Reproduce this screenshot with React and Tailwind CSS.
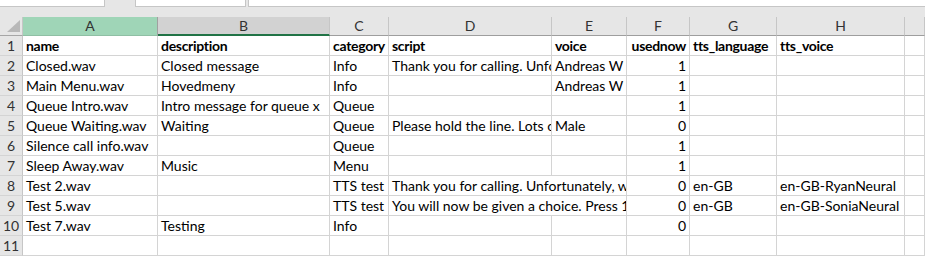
import React from "react";

const COLS = "grid grid-cols-[23px_135px_172px_59px_163px_75px_63px_87px_128px_1fr]";

const rows = [
  { n: 1, bold: true, c: ["name", "description", "category", "script", "voice", "usednow", "tts_language", "tts_voice", ""] },
  { n: 2, c: ["Closed.wav", "Closed message", "Info", "Thank you for calling. Unfortunately, we are closed right now.", "Andreas W", "1", "", "", ""] },
  { n: 3, c: ["Main Menu.wav", "Hovedmeny", "Info", "", "Andreas W", "1", "", "", ""] },
  { n: 4, c: ["Queue Intro.wav", "Intro message for queue x", "Queue", "", "", "1", "", "", ""] },
  { n: 5, c: ["Queue Waiting.wav", "Waiting", "Queue", "Please hold the line. Lots of people are calling right now.", "Male", "0", "", "", ""] },
  { n: 6, c: ["Silence call info.wav", "", "Queue", "", "", "1", "", "", ""] },
  { n: 7, c: ["Sleep Away.wav", "Music", "Menu", "", "", "1", "", "", ""] },
  { n: 8, span: true, c: ["Test 2.wav", "", "TTS test", "Thank you for calling. Unfortunately, we are closed right now.", null, "0", "en-GB", "en-GB-RyanNeural", ""] },
  { n: 9, span: true, c: ["Test 5.wav", "", "TTS test", "You will now be given a choice. Press 1 for sales, press 2 for support.", null, "0", "en-GB", "en-GB-SoniaNeural", ""] },
  { n: 10, c: ["Test 7.wav", "Testing", "Info", "", "", "0", "", "", ""] },
  { n: 11, c: ["", "", "", "", "", "", "", "", ""] },
];

const letters = ["A", "B", "C", "D", "E", "F", "G", "H", ""];

export default function App() {
  return (
    <div
      className="w-[925px] h-[256px] overflow-hidden bg-white text-black"
      style={{ fontFamily: "Lato, 'Open Sans', sans-serif" }}
    >
      {/* top strip */}
      <div className="h-[17px] bg-[#e6e6e6] flex items-start">
        <div className="w-[105px] h-[7px] bg-white border-r border-b border-[#c6c6c6]" />
        <div className="ml-[30px] w-[111px] h-[7px] bg-white border-l border-r border-b border-[#c6c6c6]" />
        <div className="ml-[2px] flex-1 h-[7px] bg-white border-l border-b border-[#c6c6c6]" />
      </div>
      {/* column headers */}
      <div className={`${COLS} h-[19px] bg-[#e6e6e6] text-[14px] text-[#333]`}>
        <div className="relative border-r border-b border-[#a6a6a6] border-r-[#c6c6c6]">
          <svg className="absolute left-[7px] top-[3px]" width="14" height="13" viewBox="0 0 14 13">
            <polygon points="13,0 13,12 0,12" fill="#b8b8b8" />
          </svg>
        </div>
        {letters.map((l, i) => (
          <div
            key={i}
            className={
              i === 0
                ? "bg-[#9fd5b7] border-r border-r-[#a0a0a0] border-b border-b-[#8fbfa4] flex items-end justify-center leading-[18px]"
                : i === 1
                ? "bg-[#d2d2d2] border-r border-r-[#c6c6c6] border-b-2 border-b-[#217346] flex items-end justify-center leading-[17px]"
                : "border-r border-r-[#c6c6c6] border-b border-b-[#9e9e9e] flex items-end justify-center leading-[18px]"
            }
          >
            {l}
          </div>
        ))}
      </div>
      {/* data rows */}
      {rows.map((r) => (
        <div key={r.n} className={`${COLS} h-[20px] text-[14px]`}>
          <div className="bg-[#e6e6e6] border-r border-b border-r-[#c6c6c6] border-b-[#d4d4d4] text-[#333] flex items-end justify-center leading-[17px] pb-[1px]">
            {r.n}
          </div>
          {r.c.map((v, i) => {
            if (v === null) return null;
            const isNum = i === 5;
            const span = r.span && i === 3;
            return (
              <div
                key={i}
                className={`${span ? "col-span-2" : ""} border-r border-b border-[#d4d4d4] px-[3px] flex items-end overflow-hidden whitespace-nowrap leading-[17px] pb-[1px] ${
                  isNum ? "justify-end" : ""
                } ${r.bold ? "font-bold tracking-[-0.3px]" : ""}`}
              >
                {v}
              </div>
            );
          })}
        </div>
      ))}
    </div>
  );
}
